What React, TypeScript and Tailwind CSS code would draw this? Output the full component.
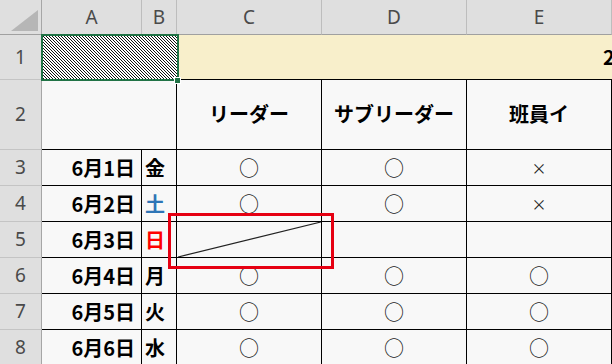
import React from "react";

const jp = "font-['Noto_Sans_CJK_JP','Noto_Sans',sans-serif]";
const head = "font-['Noto_Sans','Open_Sans',sans-serif]";

type Row = {
  n: number;
  date: string;
  dow: string;
  dowColor: string;
  c: string;
  d: string;
  e: string;
  slash?: boolean;
};

const rows: Row[] = [
  { n: 3, date: "6月1日", dow: "金", dowColor: "text-black", c: "○", d: "○", e: "×" },
  { n: 4, date: "6月2日", dow: "土", dowColor: "text-[#2e75b6]", c: "○", d: "○", e: "×" },
  { n: 5, date: "6月3日", dow: "日", dowColor: "text-[#ff0000]", c: "", d: "", e: "", slash: true },
  { n: 6, date: "6月4日", dow: "月", dowColor: "text-black", c: "○", d: "○", e: "○" },
  { n: 7, date: "6月5日", dow: "火", dowColor: "text-black", c: "○", d: "○", e: "○" },
  { n: 8, date: "6月6日", dow: "水", dowColor: "text-black", c: "○", d: "○", e: "○" },
];

function RowHead({ n }: { n: number }) {
  return (
    <div className={`${head} flex items-center justify-center bg-[#dfdfdf] border-r border-r-[#a6a6a6] border-b border-b-[#c4c4c4] text-[19px] text-[#4a4a4a]`}>
      {n}
    </div>
  );
}

function ColHead({ label }: { label: string }) {
  return (
    <div className={`${head} flex items-center justify-center bg-[#dfdfdf] border-r border-r-[#bdbdbd] border-b border-b-[#a0a0a0] text-[19px] text-[#4a4a4a]`}>
      {label}
    </div>
  );
}

function Mark({ v, slash }: { v: string; slash?: boolean }) {
  return (
    <div
      className={`${jp} flex items-center justify-center border-r border-b border-black leading-none text-[#222] ${
        v === "×" ? "text-[15px]" : "text-[20px]"
      }`}
    >
      {slash ? (
        <svg className="w-full h-full" viewBox="0 0 144 35" preserveAspectRatio="none">
          <line x1="1" y1="35" x2="144" y2="0" stroke="#222" strokeWidth="1.2" />
        </svg>
      ) : (
        v
      )}
    </div>
  );
}

export default function App() {
  return (
    <div className="relative w-[612px] h-[364px] overflow-hidden bg-[#f8f8f8]">
      <div className="grid grid-cols-[42px_100px_35px_145px_145px_145px] grid-rows-[35px_45px_70px_repeat(6,36px)]">
        {/* corner */}
        <div className="bg-[#dfdfdf] border-r border-r-[#a6a6a6] border-b border-b-[#a0a0a0] flex items-end justify-end pr-[3px] pb-[3px]">
          <svg width="27" height="21" viewBox="0 0 27 21">
            <polygon points="27,0 27,21 0,21" fill="#b6b6b6" />
          </svg>
        </div>
        <ColHead label="A" />
        <ColHead label="B" />
        <ColHead label="C" />
        <ColHead label="D" />
        <ColHead label="E" />

        {/* row 1 */}
        <RowHead n={1} />
        <div className="col-span-2 bg-white">
          <svg className="w-full h-full">
            <defs>
              <pattern id="hatch" width="3" height="3" patternUnits="userSpaceOnUse">
                <rect x="0" y="0" width="1" height="1" fill="#111" />
                <rect x="1" y="1" width="1" height="1" fill="#111" />
                <rect x="2" y="2" width="1" height="1" fill="#111" />
              </pattern>
            </defs>
            <rect width="100%" height="100%" fill="url(#hatch)" />
          </svg>
        </div>
        <div className={`${jp} col-span-3 bg-[#f8efcb] border-b border-black flex items-center pl-[426px] text-[20px] font-bold text-black whitespace-nowrap overflow-hidden`}>
          2024年6月
        </div>

        {/* row 2 */}
        <RowHead n={2} />
        <div className="col-span-2 border-r border-b border-black" />
        <div className={`${jp} flex items-center justify-center border-r border-b border-black text-[20px] font-bold text-black pb-[2px]`}>
          リーダー
        </div>
        <div className={`${jp} flex items-center justify-center border-r border-b border-black text-[20px] font-bold text-black pb-[2px]`}>
          サブリーダー
        </div>
        <div className={`${jp} flex items-center justify-center border-r border-b border-black text-[20px] font-bold text-black pb-[2px]`}>
          班員イ
        </div>

        {rows.map((r) => (
          <React.Fragment key={r.n}>
            <RowHead n={r.n} />
            <div className={`${jp} flex items-center justify-end pr-[6px] border-r border-b border-black text-[20px] font-bold text-black`}>
              {r.date}
            </div>
            <div className={`${jp} flex items-center pl-[3px] border-r border-b border-black text-[20px] font-bold ${r.dowColor}`}>
              {r.dow}
            </div>
            <Mark v={r.c} slash={r.slash} />
            <Mark v={r.d} />
            <Mark v={r.e} />
          </React.Fragment>
        ))}
      </div>

      {/* active cell selection */}
      <div className="absolute left-[41px] top-[34px] w-[138px] h-[47px] border-2 border-[#217346]" />
      <div className="absolute left-[174px] top-[77px] w-[7px] h-[7px] bg-[#217346] border border-white" />

      {/* highlight box */}
      <div className="absolute left-[168px] top-[213px] w-[166px] h-[56px] border-[3px] border-[#e60012]" />
    </div>
  );
}
